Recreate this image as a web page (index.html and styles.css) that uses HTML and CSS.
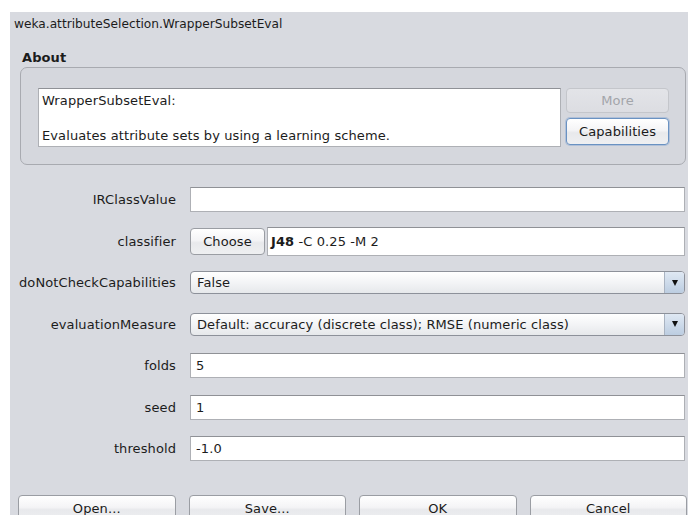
FILE: index.html
```html
<!DOCTYPE html>
<html>
<head>
<meta charset="utf-8">
<title>weka.attributeSelection.WrapperSubsetEval</title>
<link rel="stylesheet" href="styles.css">
</head>
<body>
<div class="window">
  <div class="title">weka.attributeSelection.WrapperSubsetEval</div>
  <div class="about-label">About</div>
  <div class="about">
    <div class="about-text">WrapperSubsetEval:<br><br>Evaluates attribute sets by using a learning scheme.</div>
    <div class="about-buttons">
      <button class="btn btn-more" disabled>More</button>
      <button class="btn btn-focus">Capabilities</button>
    </div>
  </div>

  <div class="props">
    <div class="label">IRClassValue</div>
    <div class="field"></div>

    <div class="label">classifier</div>
    <div class="chooser">
      <button class="btn btn-choose">Choose</button>
      <div class="field field-tall"><b>J48</b>&nbsp;-C 0.25 -M 2</div>
    </div>

    <div class="label">doNotCheckCapabilities</div>
    <div class="combo"><span class="combo-value">False</span><span class="combo-arrow"></span></div>

    <div class="label">evaluationMeasure</div>
    <div class="combo"><span class="combo-value">Default: accuracy (discrete class); RMSE (numeric class)</span><span class="combo-arrow"></span></div>

    <div class="label">folds</div>
    <div class="field">5</div>

    <div class="label">seed</div>
    <div class="field">1</div>

    <div class="label">threshold</div>
    <div class="field">-1.0</div>
  </div>

  <div class="actions">
    <button class="btn btn-action">Open...</button>
    <button class="btn btn-action">Save...</button>
    <button class="btn btn-action">OK</button>
    <button class="btn btn-action">Cancel</button>
  </div>
</div>
</body>
</html>
```

FILE: styles.css
```css
html, body {
  margin: 0;
  height: 515px;
  overflow: hidden;
  background: #ffffff;
}

body {
  font-family: "DejaVu Sans", "Liberation Sans", sans-serif;
  font-size: 13px;
  color: #1c1c1c;
  letter-spacing: 0.1px;
}

.window {
  margin: 12px 0 0 10px;
  height: 503px;
  background: #d8dae0;
  display: flex;
  flex-direction: column;
}

/* the dialog keeps its natural row heights; the bottom row runs off the edge */
.window > * {
  flex: none;
}

.title {
  padding: 4px 0 0 4px;
  font-size: 12.2px;
  letter-spacing: 0;
  line-height: 16px;
  height: 16px;
}

.about-label {
  margin: 18px 0 0 12px;
  font-weight: bold;
  line-height: 16px;
}

/* rounded group box around the description */
.about {
  margin: 1px 2px 0 10px;
  height: 98px;
  box-sizing: border-box;
  border: 1px solid #a8aab0;
  border-radius: 7px;
  padding: 20px 16px 0 17px;
  display: flex;
  gap: 5px;
  background: #d5d7dd;
}

.about-text {
  flex: 1;
  height: 59px;
  box-sizing: border-box;
  background: #ffffff;
  border: 1px solid #aeb0b5;
  border-top-color: #8f9196;
  padding: 3px 0 0 3px;
  line-height: 17.5px;
}

.about-buttons {
  width: 103px;
  display: flex;
  flex-direction: column;
  gap: 5px;
}

/* aqua-style push buttons */
.btn {
  font: inherit;
  letter-spacing: inherit;
  color: #1a1a1a;
  margin: 0;
  padding: 0;
  box-sizing: border-box;
  border: 1px solid #9a9da3;
  border-radius: 4px;
  background: linear-gradient(#ffffff 0%, #f4f4f6 45%, #e8e9ec 55%, #eeeff1 100%);
  text-align: center;
}

.btn-more {
  height: 25px;
  color: #a3a5aa;
  border-color: #c4c6cb;
  background: linear-gradient(#e3e4e8, #dcdde2);
}

.btn-focus {
  height: 27px;
  border-color: #6a92c2;
  box-shadow: 0 0 0 1px rgba(130, 165, 210, 0.45);
}

.props {
  margin-top: 22px;
  padding-right: 3px;
  display: grid;
  grid-template-columns: 166px 1fr;
  grid-auto-rows: 25px;
  column-gap: 14px;
  row-gap: 16.5px;
  align-items: center;
}

.label {
  text-align: right;
  white-space: nowrap;
}

.field {
  height: 25px;
  box-sizing: border-box;
  background: #ffffff;
  border: 1px solid #aeb0b5;
  border-top-color: #8f9196;
  padding: 0 5px;
  line-height: 23px;
  white-space: nowrap;
}

.chooser {
  display: flex;
  gap: 2px;
  align-items: center;
}

.btn-choose {
  width: 75px;
  height: 27px;
  flex: none;
}

.field-tall {
  flex: 1;
  height: 29px;
  line-height: 27px;
  padding-left: 3px;
}

/* combo box with the blue arrow cap on the right */
.combo {
  height: 23px;
  box-sizing: border-box;
  display: flex;
  border: 1px solid #8d919a;
  border-radius: 4px;
  background: linear-gradient(#ffffff 0%, #f3f4f6 50%, #e6e8eb 100%);
  overflow: hidden;
}

.combo-value {
  flex: 1;
  padding-left: 6px;
  line-height: 21px;
  white-space: nowrap;
}

.combo-arrow {
  width: 19px;
  flex: none;
  border-left: 1px solid #a9b3c1;
  background: linear-gradient(#dfe8f3, #bccde1);
  display: flex;
  align-items: center;
  justify-content: center;
}

.combo-arrow::before {
  content: "";
  border-left: 3.5px solid transparent;
  border-right: 3.5px solid transparent;
  border-top: 6px solid #111111;
}

.actions {
  margin-top: 34px;
  padding: 0 1px 0 8px;
  display: grid;
  grid-template-columns: repeat(4, 1fr);
  column-gap: 13px;
}

.btn-action {
  height: 27px;
  line-height: 25px;
}
```
